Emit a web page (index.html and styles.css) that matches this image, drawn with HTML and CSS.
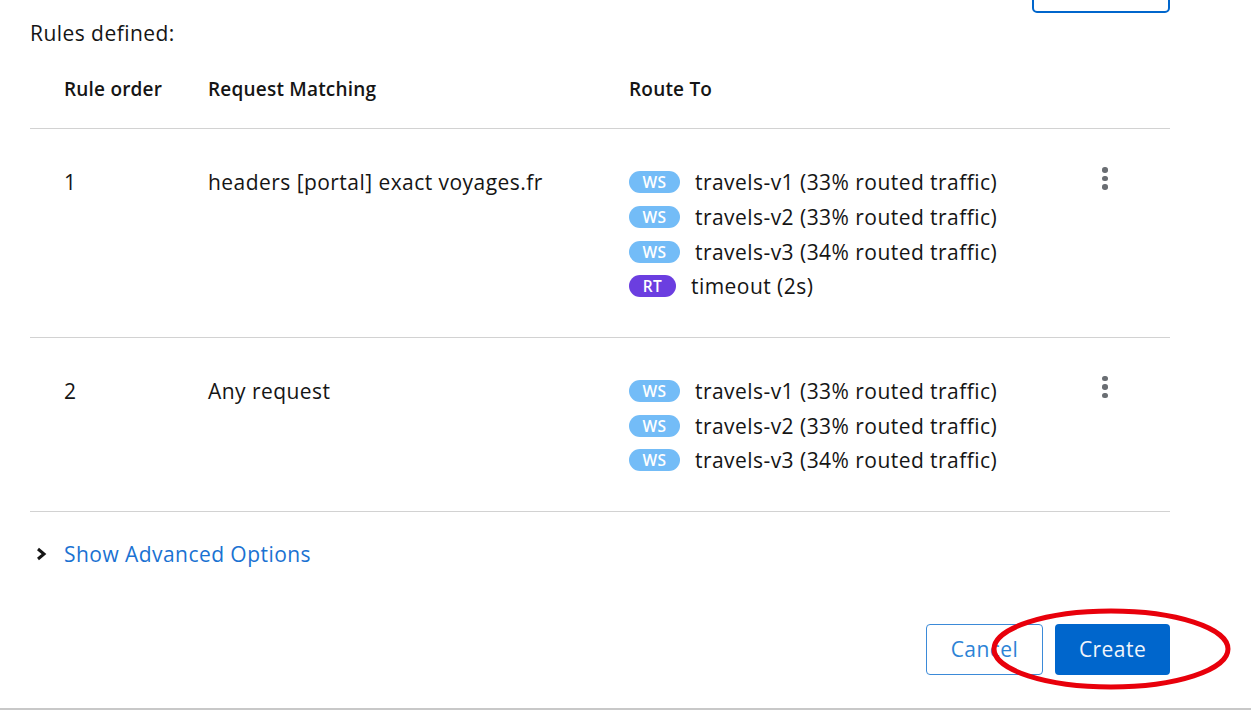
FILE: index.html
```html
<!DOCTYPE html>
<html lang="en">
<head>
<meta charset="utf-8">
<title>Rules</title>
<link rel="stylesheet" href="styles.css">
</head>
<body>
<div class="page">
  <div class="toolbar">
    <button class="btn-secondary top-btn" type="button"></button>
  </div>
  <div class="label">Rules defined:</div>
  <div class="table">
    <div class="row head">
      <div class="c1">Rule order</div>
      <div class="c2">Request Matching</div>
      <div class="c3">Route To</div>
      <div class="c4"></div>
    </div>
    <div class="row body">
      <div class="c1 line">1</div>
      <div class="c2 line">headers [portal] exact voyages.fr</div>
      <div class="c3">
        <div class="route"><span class="badge ws">WS</span><span>travels-v1 (33% routed traffic)</span></div>
        <div class="route"><span class="badge ws">WS</span><span>travels-v2 (33% routed traffic)</span></div>
        <div class="route"><span class="badge ws">WS</span><span>travels-v3 (34% routed traffic)</span></div>
        <div class="route"><span class="badge rt">RT</span><span>timeout (2s)</span></div>
      </div>
      <div class="c4"><span class="kebab"><i></i><i></i><i></i></span></div>
    </div>
    <div class="row body">
      <div class="c1 line">2</div>
      <div class="c2 line">Any request</div>
      <div class="c3">
        <div class="route"><span class="badge ws">WS</span><span>travels-v1 (33% routed traffic)</span></div>
        <div class="route"><span class="badge ws">WS</span><span>travels-v2 (33% routed traffic)</span></div>
        <div class="route"><span class="badge ws">WS</span><span>travels-v3 (34% routed traffic)</span></div>
      </div>
      <div class="c4"><span class="kebab"><i></i><i></i><i></i></span></div>
    </div>
  </div>
  <div class="advanced">
    <svg class="chev" width="14" height="14" viewBox="0 0 14 14"><path d="M4 2 L10 7 L4 12" fill="none" stroke="#151515" stroke-width="3" stroke-linejoin="miter"/></svg>
    <a href="#" class="link">Show Advanced Options</a>
  </div>
  <div class="actions">
    <button class="btn-secondary cancel" type="button">Cancel</button>
    <button class="btn-primary" type="button">Create</button>
    <svg class="annot" width="250" height="90" viewBox="0 0 250 90"><ellipse cx="125" cy="45" rx="117" ry="38" fill="none" stroke="#e8000b" stroke-width="5"/></svg>
  </div>
</div>
<div class="bottom-rule"></div>
</body>
</html>
```
FILE: styles.css
```css
* { box-sizing: border-box; }
html, body { margin: 0; padding: 0; background: #fff; }
body {
  font-family: "Open Sans", "Liberation Sans", sans-serif;
  font-size: 21px;
  letter-spacing: 0.45px;
  color: #151515;
  width: 1251px;
  height: 713px;
  overflow: hidden;
}
.page { width: 1170px; padding-left: 30px; }
.toolbar { display: flex; justify-content: flex-end; height: 13px; }
.top-btn {
  width: 138px;
  height: 40px;
  margin-top: -27px;
  border: 2px solid #0066cc;
  border-radius: 5px;
  background: #fff;
}
.label { margin-top: 8px; line-height: 24px; height: 24px; }
.table { margin-top: 16px; }
.row {
  display: grid;
  grid-template-columns: 178px 421px 453px 88px;
  border-bottom: 1px solid #d2d2d2;
}
.row .c1 { padding-left: 34px; }
.head { height: 68px; font-weight: 600; font-size: 19px; letter-spacing: 0.2px; line-height: 24px; }
.head > div { padding-top: 16px; }
.body { padding-top: 36px; padding-bottom: 33px; }
.line { line-height: 34.7px; }
.route { display: flex; align-items: center; height: 34.7px; white-space: nowrap; }
.badge {
  display: inline-flex;
  align-items: center;
  justify-content: center;
  height: 22px;
  border-radius: 11px;
  color: #fff;
  font-size: 15.5px;
  letter-spacing: 0.4px;
  font-weight: 600;
  margin-right: 15px;
}
.ws { background: #73bcf7; width: 51px; }
.rt { background: #6b3ee0; width: 47px; margin-right: 15px; }
.kebab {
  display: flex;
  flex-direction: column;
  gap: 3px;
  width: 5px;
  margin-left: 20px;
  margin-top: 2px;
}
.kebab i { display: block; width: 5.5px; height: 5.5px; border-radius: 50%; background: #6a6e73; }
.advanced { display: flex; align-items: center; height: 24px; margin-top: 30px; }
.chev { margin-left: 4px; margin-right: 16px; }
.link { color: #1a72d2; text-decoration: none; }
.actions {
  position: relative;
  display: flex;
  justify-content: flex-end;
  gap: 12px;
  margin-top: 58px;
}
.actions button {
  height: 51px;
  font-family: inherit;
  font-size: 21px;
  letter-spacing: 0.45px;
  border-radius: 4px;
  padding: 0;
}
.btn-secondary.cancel {
  width: 117px;
  margin-left: 1px;
  background: #fff;
  color: #2c83d6;
  border: 1px solid #3b8ad8;
}
.btn-primary {
  width: 115px;
  background: #0066cc;
  color: #f0f5fb;
  border: none;
}
.annot { position: absolute; right: -66px; top: -20px; pointer-events: none; }
.bottom-rule { position: absolute; left: 0; top: 708px; width: 1251px; height: 2px; background: #c8c8c8; }
```
